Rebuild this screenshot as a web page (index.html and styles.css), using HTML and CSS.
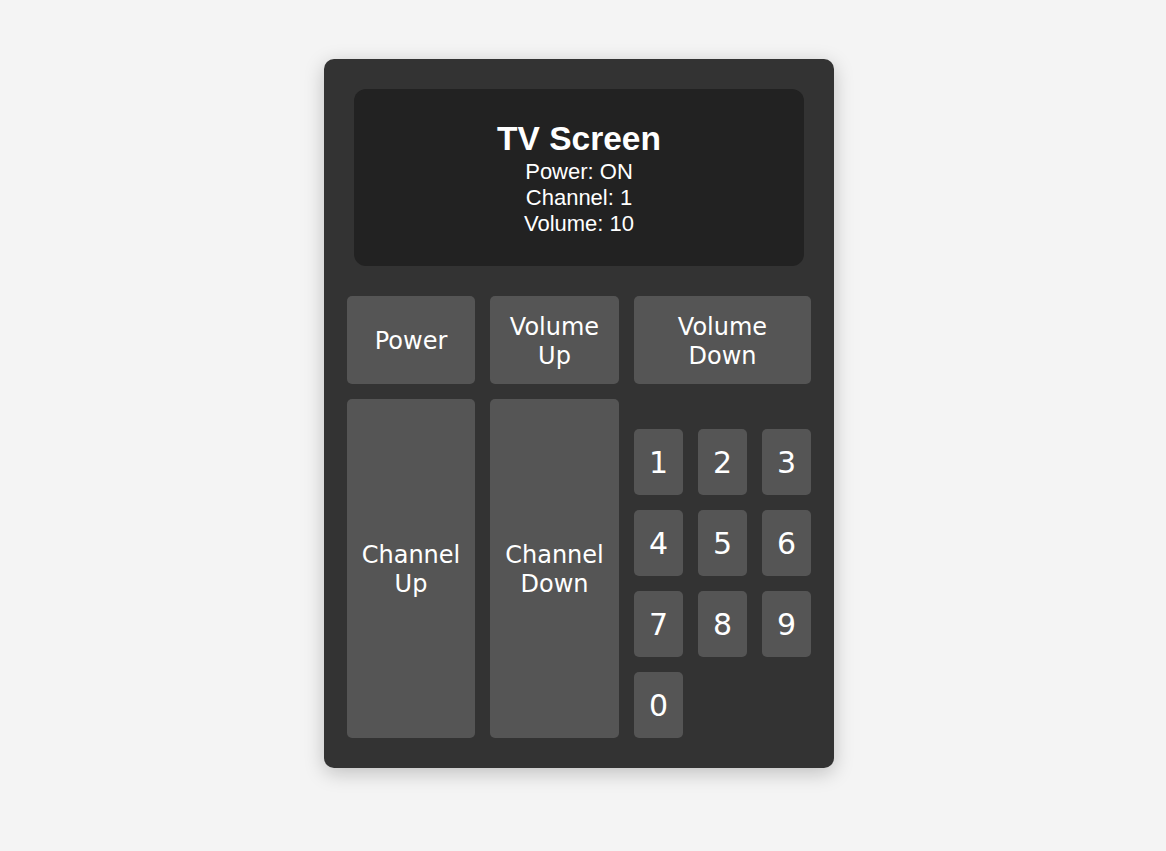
FILE: index.html
```html
<!DOCTYPE html>
<html>
<head>
<meta charset="utf-8">
<title>TV Remote</title>
<link rel="stylesheet" href="styles.css">
</head>
<body>
<div class="page">
  <div class="remote">
    <div class="screen">
      <h1 class="title">TV Screen</h1>
      <div class="line">Power: ON</div>
      <div class="line">Channel: 1</div>
      <div class="line">Volume: 10</div>
    </div>
    <div class="controls">
      <button class="btn">Power</button>
      <button class="btn">Volume<br>Up</button>
      <button class="btn">Volume<br>Down</button>
      <button class="btn">Channel<br>Up</button>
      <button class="btn">Channel<br>Down</button>
      <div class="numpad">
        <button class="btn num">1</button>
        <button class="btn num">2</button>
        <button class="btn num">3</button>
        <button class="btn num">4</button>
        <button class="btn num">5</button>
        <button class="btn num">6</button>
        <button class="btn num">7</button>
        <button class="btn num">8</button>
        <button class="btn num">9</button>
        <button class="btn num">0</button>
      </div>
    </div>
  </div>
</div>
</body>
</html>
```

FILE: styles.css
```css
html, body {
  margin: 0;
  padding: 0;
  background: #f4f4f4;
}
.page {
  display: flex;
  justify-content: center;
  padding: 59px 8px 0 0;
  min-height: 851px;
  box-sizing: border-box;
}
.remote {
  width: 510px;
  height: 709px;
  box-sizing: border-box;
  background: #333333;
  border-radius: 10px;
  padding: 30px 23px;
  box-shadow: 0 5px 20px rgba(0, 0, 0, 0.22);
}
.screen {
  height: 177px;
  margin: 0 7px 30px;
  background: #222222;
  border-radius: 12px;
  display: flex;
  flex-direction: column;
  align-items: center;
  justify-content: center;
  color: #ffffff;
  font-family: "Liberation Sans", Arial, sans-serif;
}
.title {
  margin: 0;
  font-size: 33.5px;
  font-weight: bold;
  line-height: 40px;
}
.line {
  font-size: 22px;
  line-height: 26px;
}
.controls {
  display: grid;
  grid-template-columns: 128px 129px 177px;
  grid-template-rows: 88px 339px;
  gap: 15px;
}
.btn {
  border: none;
  margin: 0;
  padding: 3px 0 0;
  background: #555555;
  color: #ffffff;
  border-radius: 5px;
  font-family: "DejaVu Sans", sans-serif;
  font-size: 24px;
  line-height: 29px;
}
.numpad {
  align-self: end;
  display: grid;
  grid-template-columns: repeat(3, 49px);
  grid-auto-rows: 66px;
  gap: 15px;
}
.num {
  padding-top: 1px;
  font-size: 30px;
  line-height: 36px;
}
```
